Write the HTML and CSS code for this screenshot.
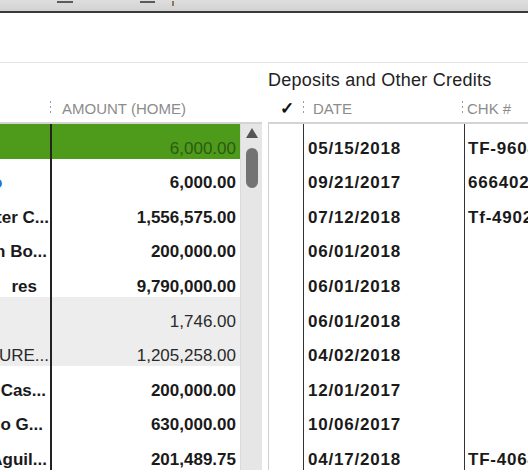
FILE: index.html
```html
<!DOCTYPE html>
<html>
<head>
<meta charset="utf-8">
<link rel="stylesheet" href="styles.css">
</head>
<body>
<div class="page">
  <div class="titlebar">
    <span class="tb-dash tb-d1"></span>
    <span class="tb-dash tb-d2"></span>
    <span class="tb-mark"></span>
  </div>
  <div class="toolbar"></div>
  <div class="main">
    <div class="left">
      <div class="grouptitle"></div>
      <div class="colhead lhead">
        <span class="sep"></span>
        <span class="htext">AMOUNT (HOME)</span>
      </div>
      <div class="lgrid">
        <div class="rows">
          <div class="row sel"><div class="c1"></div><div class="c2">6,000.00</div></div>
          <div class="row"><div class="c1"><span class="blue">o</span></div><div class="c2">6,000.00</div></div>
          <div class="row"><div class="c1">ter C...</div><div class="c2">1,556,575.00</div></div>
          <div class="row"><div class="c1 p3">n Bo...</div><div class="c2">200,000.00</div></div>
          <div class="row"><div class="c1 p12">res</div><div class="c2">9,790,000.00</div></div>
          <div class="row alt"><div class="c1"></div><div class="c2">1,746.00</div></div>
          <div class="row alt"><div class="c1">URE...</div><div class="c2">1,205,258.00</div></div>
          <div class="row"><div class="c1 p4">Cas...</div><div class="c2">200,000.00</div></div>
          <div class="row"><div class="c1 p7">io G...</div><div class="c2">630,000.00</div></div>
          <div class="row"><div class="c1 p3">Aguil...</div><div class="c2">201,489.75</div></div>
        </div>
        <div class="vscroll">
          <div class="arrow"></div>
          <div class="thumb"></div>
        </div>
      </div>
    </div>
    <div class="right">
      <div class="grouptitle">Deposits and Other Credits</div>
      <div class="colhead rhead">
        <span class="hcheck">&#10003;</span>
        <span class="sep"></span>
        <span class="htext hdate">DATE</span>
        <span class="sep"></span>
        <span class="htext hchk">CHK #</span>
      </div>
      <div class="rgrid">
        <div class="row"><div class="ck"></div><div class="dt">05/15/2018</div><div class="cn">TF-9604</div></div>
        <div class="row"><div class="ck"></div><div class="dt">09/21/2017</div><div class="cn">6664022</div></div>
        <div class="row"><div class="ck"></div><div class="dt">07/12/2018</div><div class="cn">Tf-4902</div></div>
        <div class="row"><div class="ck"></div><div class="dt">06/01/2018</div><div class="cn"></div></div>
        <div class="row"><div class="ck"></div><div class="dt">06/01/2018</div><div class="cn"></div></div>
        <div class="row"><div class="ck"></div><div class="dt">06/01/2018</div><div class="cn"></div></div>
        <div class="row"><div class="ck"></div><div class="dt">04/02/2018</div><div class="cn"></div></div>
        <div class="row"><div class="ck"></div><div class="dt">12/01/2017</div><div class="cn"></div></div>
        <div class="row"><div class="ck"></div><div class="dt">10/06/2017</div><div class="cn"></div></div>
        <div class="row"><div class="ck"></div><div class="dt">04/17/2018</div><div class="cn">TF-4064</div></div>
      </div>
    </div>
  </div>
</div>
</body>
</html>
```
FILE: styles.css
```css
* { box-sizing: border-box; }
html, body { margin: 0; padding: 0; background: #fff; }
body { font-family: "Liberation Sans", Arial, sans-serif; color: #1a1a1a; }
.page { width: 528px; height: 472px; overflow: hidden; }

.titlebar {
  height: 13px;
  background: linear-gradient(#dedede, #d2d2d2);
  border-bottom: 2px solid #3a3a3a;
  display: flex;
  align-items: flex-start;
  padding-top: 1px;
}
.tb-dash { display: block; height: 2px; background: #5a5a5a; }
.tb-d1 { width: 16px; margin-left: 57px; }
.tb-d2 { width: 15px; margin-left: 67px; }
.tb-mark { width: 2px; height: 5px; background: #8a7a60; margin-left: 17px; }

.toolbar { height: 50px; border-bottom: 1px solid #e2e2e2; }

.main { display: flex; }
.left { width: 268px; flex: none; }
.right { flex: 1; min-width: 0; }

.grouptitle {
  height: 30px;
  padding: 6px 0 0 0;
  font-size: 18px;
  line-height: 22px;
  letter-spacing: 0.25px;
  color: #222;
  white-space: nowrap;
}

.colhead {
  height: 29px;
  display: flex;
  align-items: center;
  padding-top: 2px;
  font-size: 15px;
  color: #8c8c8c;
  white-space: nowrap;
}
.sep {
  display: block;
  width: 1px;
  height: 15px;
  background: repeating-linear-gradient(to bottom, #9a9a9a 0 2px, transparent 2px 5px);
}
.lhead { padding-left: 50px; }
.lhead .htext { margin-left: 11px; }
.hcheck { width: 35px; padding-left: 12px; color: #111; font-size: 17px; font-weight: bold; }
.hdate { margin-left: 9px; width: 149px; }
.hchk { margin-left: 4px; }

.lgrid {
  display: flex;
  width: 262px;
  border-top: 2px solid #d4d4d4;
}
.rows { width: 240px; }
.row {
  height: 34.6px;
  display: flex;
  align-items: flex-end;
  font-size: 17px;
  font-weight: bold;
  line-height: 20px;
  white-space: nowrap;
}
.c1 {
  width: 52px;
  height: 100%;
  border-right: 2px solid #222;
  display: flex;
  align-items: flex-end;
  justify-content: flex-end;
  padding-right: 1px;
  overflow: hidden;
}
.c1.p3 { padding-right: 3px; }
.c1.p4 { padding-right: 4px; }
.c1.p7 { padding-right: 7px; }
.c1.p12 { padding-right: 13px; }
.c1 .blue { color: #2a6fd0; margin-right: auto; margin-left: -8px; }
.c2 { flex: 1; text-align: right; padding-right: 4px; }
.row.sel { background: #4e9a1b; }
.row.sel .c2 { color: #2c5a12; font-weight: normal; }
.row.alt { background: #ededed; }
.row.alt .c1, .row.alt .c2 { font-weight: normal; color: #2a2a2a; }

.vscroll {
  width: 22px;
  background: #e6e6e6;
  border-left: 1px solid #dadada;
  display: flex;
  flex-direction: column;
  align-items: center;
  padding-top: 4px;
}
.arrow {
  width: 0; height: 0;
  border-left: 6px solid transparent;
  border-right: 6px solid transparent;
  border-bottom: 10px solid #555;
}
.thumb {
  margin-top: 10px;
  width: 12px;
  height: 40px;
  border-radius: 6px;
  background: #737373;
}

.rgrid {
  border-top: 2px solid #d4d4d4;
  border-left: 1px solid #cfcfcf;
}
.rgrid .row { letter-spacing: 0.8px; }
.ck { width: 35px; height: 100%; border-right: 1px solid #333; flex: none; }
.dt { width: 161px; height: 100%; border-right: 1px solid #333; flex: none; padding-left: 4px; display: flex; align-items: flex-end; }
.cn { flex: 1; padding-left: 3px; overflow: hidden; }
```
